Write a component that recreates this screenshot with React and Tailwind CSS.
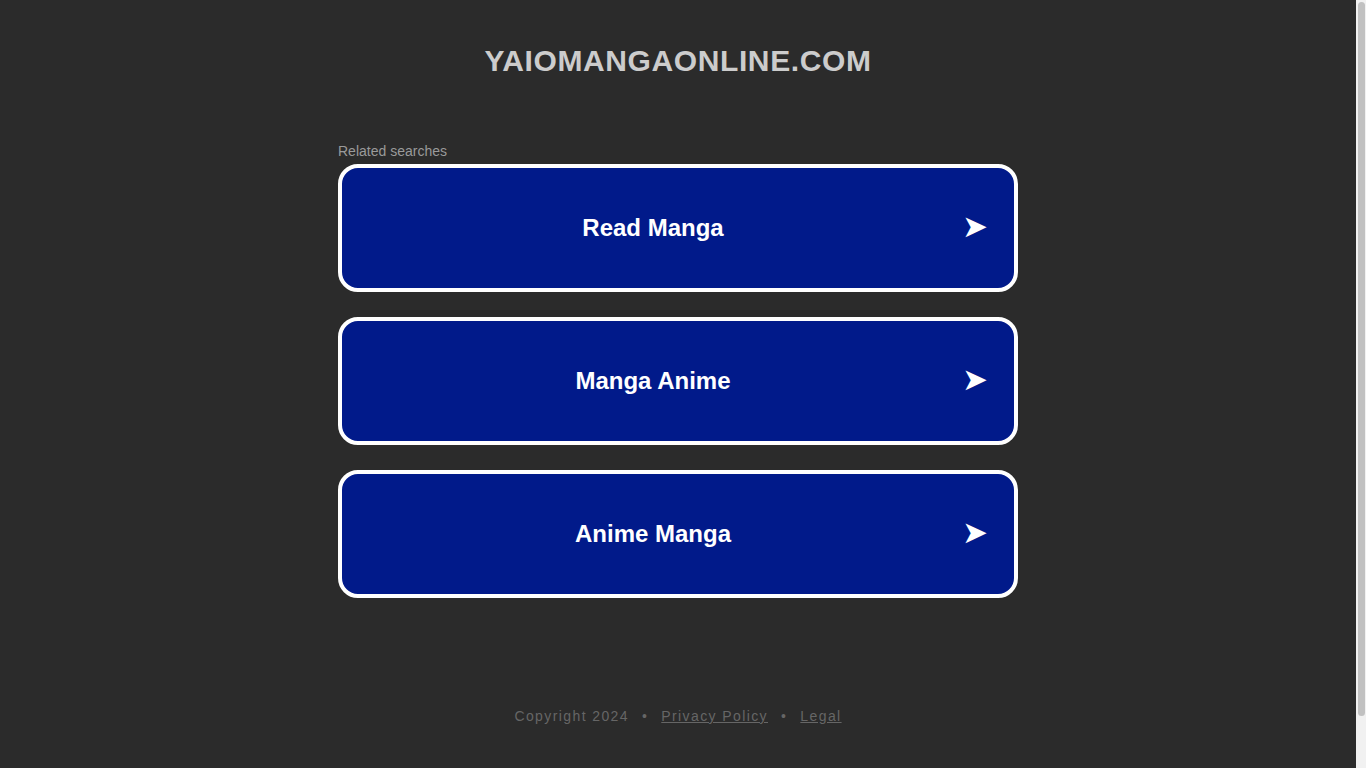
const searches = ["Read Manga", "Manga Anime", "Anime Manga"];

export default function App() {
  return (
    <div className="h-screen flex bg-[#2b2b2b] font-['Liberation_Sans',Arial,sans-serif] overflow-hidden">
      <div className="flex-1 flex flex-col items-center">
        <h1 className="mt-[43px] text-[30px] leading-[36px] font-bold text-[#cccccc] tracking-[0.6px]">
          YAIOMANGAONLINE.COM
        </h1>

        <div className="w-[680px] mt-[64px]">
          <p className="text-[14px] leading-[16px] text-[#9a9a9a]">Related searches</p>
          <div className="mt-[5px] flex flex-col gap-[25px]">
            {searches.map((s) => (
              <a
                key={s}
                href="#"
                className="h-[128px] rounded-[20px] border-4 border-white bg-[#011a8a] flex items-center pl-[24px] pr-[26px]"
              >
                <span className="flex-1 text-center text-[24px] font-bold text-white">{s}</span>
                <span className="ml-[22px] mb-[4px] text-[31px] text-white leading-none">➤</span>
              </a>
            ))}
          </div>
        </div>

        <div className="mt-[108px] text-[14px] tracking-[1.4px] text-[#666666] flex gap-[13px]">
          <span>Copyright 2024</span>
          <span>•</span>
          <a href="#" className="underline">Privacy Policy</a>
          <span>•</span>
          <a href="#" className="underline">Legal</a>
        </div>
      </div>

      {/* scrollbar */}
      <div className="w-[10px] bg-[#f1f1f1] py-[2px] px-[1.5px]">
        <div className="h-[714px] rounded-full bg-[#c1c1c1]" />
      </div>
    </div>
  );
}
